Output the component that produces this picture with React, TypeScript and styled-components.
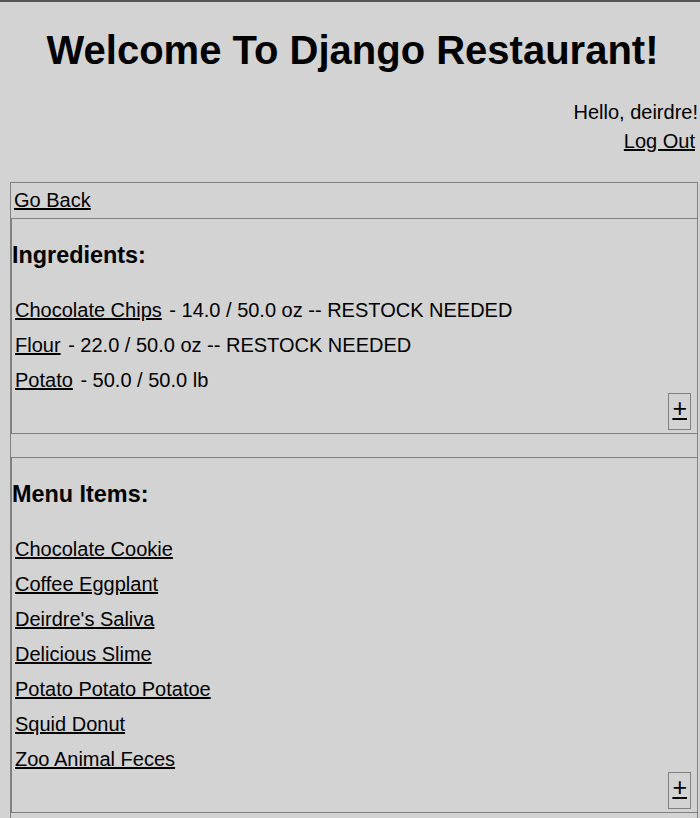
import styled, { createGlobalStyle } from "styled-components";

const GlobalStyle = createGlobalStyle`
    html, body {
        margin: 0;
        padding: 0;
        background: #d3d3d3;
    }
    body {
        font-family: "Liberation Sans", Arial, sans-serif;
        font-size: 20px;
        color: #000;
    }
    a {
        color: #000;
        text-decoration: underline;
    }
`;

const Page = styled.div`
    border-top: 2px solid #555;
`;

const Title = styled.h1`
    margin: 25px 0 25px;
    padding-left: 5px;
    font-size: 40px;
    font-weight: bold;
    line-height: 46px;
    text-align: center;
`;

const UserBox = styled.div`
    display: flex;
    flex-direction: column;
    align-items: flex-end;
    padding-right: 2px;
    line-height: 29px;
    margin-bottom: 26px;
`;

const LogOut = styled.a`
    margin-right: 3px;
`;

const Panel = styled.div`
    box-sizing: border-box;
    width: 688px;
    margin-left: 10px;
    border: 1px solid #808080;
    border-bottom: none;
`;

const NavRow = styled.div`
    padding: 6px 3px;
    line-height: 23px;
`;

const Section = styled.section`
    display: flex;
    flex-direction: column;
    border-top: 1px solid #808080;
    border-left: 1px solid #808080;
    border-bottom: 1px solid #808080;
    padding-bottom: 3px;
`;

const SectionTitle = styled.h3`
    margin: 23px 0 0;
    font-size: 23.4px;
    line-height: 27px;
    font-weight: bold;
`;

const ItemList = styled.ul`
    list-style: none;
    margin: 30px 0 0;
    padding: 0 0 0 3px;
    display: flex;
    flex-direction: column;
    gap: 12px;
`;

const Item = styled.li`
    line-height: 23px;
`;

const ItemLink = styled.a<{ $spaced?: boolean }>`
    margin-right: ${(p) => (p.$spaced ? "2px" : "0")};
`;

const AddBox = styled.div`
    align-self: flex-end;
    margin: 1px 6px 0 0;
    border: 1px solid #808080;
    padding: 0 3px 6px;
    font-size: 25px;
    line-height: 29px;

    a {
        text-decoration-thickness: 2px;
    }
`;

const Spacer = styled.div<{ $h: number }>`
    height: ${(p) => p.$h}px;
`;

type Ingredient = { name: string; amount: string; restock?: boolean };

const ingredients: Ingredient[] = [
    { name: "Chocolate Chips", amount: "14.0 / 50.0 oz", restock: true },
    { name: "Flour", amount: "22.0 / 50.0 oz", restock: true },
    { name: "Potato", amount: "50.0 / 50.0 lb" },
];

const menuItems = [
    "Chocolate Cookie",
    "Coffee Eggplant",
    "Deirdre's Saliva",
    "Delicious Slime",
    "Potato Potato Potatoe",
    "Squid Donut",
    "Zoo Animal Feces",
];

export default function App() {
    return (
        <Page>
            <GlobalStyle />
            <Title>Welcome To Django Restaurant!</Title>
            <UserBox>
                <span>Hello, deirdre!</span>
                <LogOut href="#">Log Out</LogOut>
            </UserBox>
            <Panel>
                <NavRow>
                    <a href="#">Go Back</a>
                </NavRow>
                <Section>
                    <SectionTitle>Ingredients:</SectionTitle>
                    <ItemList>
                        {ingredients.map((ing) => (
                            <Item key={ing.name}>
                                <ItemLink $spaced href="#">
                                    {ing.name}
                                </ItemLink>{" "}
                                - {ing.amount}
                                {ing.restock ? " -- RESTOCK NEEDED" : ""}
                            </Item>
                        ))}
                    </ItemList>
                    <AddBox>
                        <a href="#">+</a>
                    </AddBox>
                </Section>
                <Spacer $h={23} />
                <Section>
                    <SectionTitle>Menu Items:</SectionTitle>
                    <ItemList>
                        {menuItems.map((name) => (
                            <Item key={name}>
                                <ItemLink href="#">{name}</ItemLink>
                            </Item>
                        ))}
                    </ItemList>
                    <AddBox>
                        <a href="#">+</a>
                    </AddBox>
                </Section>
                <Spacer $h={5} />
            </Panel>
        </Page>
    );
}
